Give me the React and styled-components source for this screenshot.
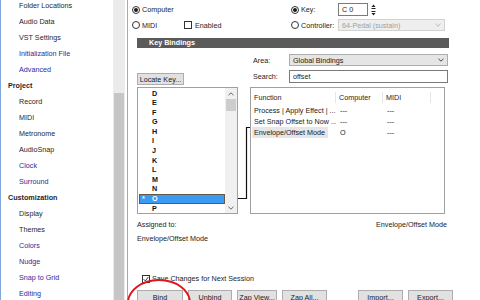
import React from 'react';
import styled, { createGlobalStyle } from 'styled-components';

const GlobalStyle = createGlobalStyle`
  html, body {
    margin: 0;
    padding: 0;
    background: #fff;
  }
  body {
    font-family: 'Liberation Sans', Arial, sans-serif;
    font-size: 7.2px;
    color: #1c1c1c;
  }
`;

const navItems = [
  { label: 'Folder Locations' },
  { label: 'Audio Data' },
  { label: 'VST Settings' },
  { label: 'Initialization File', blue: true },
  { label: 'Advanced', blue: true },
  { label: 'Project', head: true },
  { label: 'Record' },
  { label: 'MIDI' },
  { label: 'Metronome' },
  { label: 'AudioSnap' },
  { label: 'Clock', blue: true },
  { label: 'Surround', blue: true },
  { label: 'Customization', head: true },
  { label: 'Display' },
  { label: 'Themes' },
  { label: 'Colors', blue: true },
  { label: 'Nudge', blue: true },
  { label: 'Snap to Grid', blue: true },
  { label: 'Editing', blue: true },
];

const keys = ['D', 'E', 'F', 'G', 'H', 'I', 'J', 'K', 'L', 'M', 'N', 'O', 'P'];

const bindings = [
  { fn: 'Process | Apply Effect | ...', comp: '---', midi: '---' },
  { fn: 'Set Snap Offset to Now ...', comp: '---', midi: '---' },
  { fn: 'Envelope/Offset Mode', comp: 'O', midi: '---', current: true },
];

const Window = styled.div`
  position: relative;
  width: 480px;
  height: 300px;
  display: flex;
  overflow: hidden;
  border-left: 1px solid #7fa7d9;
  box-sizing: border-box;
`;

const Sidebar = styled.nav`
  width: 112px;
  flex: none;
  background: #fff;
  overflow: hidden;
`;

const NavList = styled.ul`
  list-style: none;
  margin: -2.5px 0 0;
  padding: 0;
`;

const NavItem = styled.li`
  height: 16px;
  line-height: 16px;
  white-space: nowrap;
  padding-left: ${p => (p.$head ? '7px' : '18px')};
  font-weight: ${p => (p.$head ? 700 : 400)};
  color: ${p => (p.$blue ? '#2b2ba0' : '#1f1f2c')};
`;

const SideScroll = styled.div`
  width: 12px;
  flex: none;
  display: flex;
  flex-direction: column;
  background: #ebebeb;
  padding: 0 1px;
  box-sizing: border-box;
`;

const SideThumb = styled.div`
  margin-top: 93px;
  flex: 1;
  background: #c6c6c6;
`;

const Panel = styled.main`
  flex: 1;
  margin-left: 2px;
  border-left: 1px solid #a9a9a9;
  padding: 3px 0 0 4px;
  display: flex;
  flex-direction: column;
  background: #fff;
`;

const TopRow = styled.div`
  display: flex;
  align-items: center;
  height: ${p => p.$h || 14}px;
  margin-top: ${p => p.$mt || 0}px;
`;

const Group = styled.div`
  display: flex;
  align-items: center;
  width: ${p => p.$w}px;
  flex: none;
  gap: 2px;
  white-space: nowrap;
`;

const Radio = styled.span`
  width: 8px;
  height: 8px;
  box-sizing: border-box;
  border: 1px solid #333;
  border-radius: 50%;
  display: inline-flex;
  align-items: center;
  justify-content: center;
  flex: none;
  background: #fff;
  &::after {
    content: '';
    width: 4px;
    height: 4px;
    border-radius: 50%;
    background: ${p => (p.$on ? '#1a1a1a' : 'transparent')};
  }
`;

const Check = styled.span`
  width: 8px;
  height: 8px;
  box-sizing: border-box;
  border: 1px solid #333;
  background: #fff;
  flex: none;
  display: inline-flex;
  align-items: center;
  justify-content: center;
`;

const CheckLabel = styled.span`
  margin-left: 1px;
`;

const TextBox = styled.div`
  width: ${p => p.$w}px;
  height: ${p => p.$h || 13}px;
  box-sizing: border-box;
  border: 1px solid #7a7a7a;
  background: #fff;
  display: flex;
  align-items: center;
  padding-left: 3px;
  white-space: nowrap;
`;

const Spinner = styled.svg`
  margin-left: 3px;
  flex: none;
`;

const Combo = styled.div`
  width: ${p => p.$w}px;
  height: ${p => p.$h || 12}px;
  box-sizing: border-box;
  border: 1px solid ${p => (p.$disabled ? '#d2d2d2' : '#adadad')};
  background: ${p => (p.$disabled ? '#eeeeee' : '#e5e5e5')};
  color: ${p => (p.$disabled ? '#a0a0a0' : '#1a1a1a')};
  display: flex;
  align-items: center;
  justify-content: space-between;
  padding: 0 3px;
  white-space: nowrap;
`;

const Chevron = ({ color }) => (
  <svg width="6" height="4" viewBox="0 0 6 4">
    <path d="M0.5 0.8 L3 3.2 L5.5 0.8" fill="none" stroke={color} strokeWidth="0.9" />
  </svg>
);

const SectionBar = styled.div`
  margin: 7px 0 0 5px;
  width: 312px;
  height: 10px;
  background: #5b5b5b;
  color: #fff;
  font-weight: 700;
  line-height: 10px;
  padding-left: 12px;
  box-sizing: border-box;
`;

const BindGrid = styled.div`
  margin: 6px 0 0 5px;
  display: grid;
  grid-template-columns: 101px 14px 197px;
  grid-template-rows: 31px 127px;
  row-gap: 2px;
`;

const LeftTop = styled.div`
  display: flex;
  align-items: flex-end;
`;

const Button = styled.button`
  font: inherit;
  color: #1a1a1a;
  width: ${p => p.$w || 46}px;
  height: ${p => p.$h || 14}px;
  padding: 0;
  border: 1px solid #adadad;
  background: #e1e1e1;
  box-sizing: border-box;
  text-align: center;
  flex: none;
`;

const FieldStack = styled.div`
  display: flex;
  flex-direction: column;
  gap: 4px;
`;

const FieldRow = styled.div`
  display: flex;
  align-items: center;
`;

const FieldLabel = styled.span`
  width: 36px;
  padding-left: 1px;
  flex: none;
`;

const KeyBox = styled.div`
  border: 1px solid #a0a0a0;
  display: flex;
  box-sizing: border-box;
  background: #fff;
`;

const KeyList = styled.ul`
  list-style: none;
  margin: 0;
  padding: 0.5px 0 0 1px;
  flex: 1;
`;

const KeyRow = styled.li`
  height: 9.6px;
  line-height: 9.6px;
  display: flex;
  font-weight: 700;
  color: ${p => (p.$sel ? '#fff' : '#111')};
  background: ${p => (p.$sel ? '#3b9af2' : 'transparent')};
  outline: ${p => (p.$sel ? '1px solid #6a5846' : 'none')};
  outline-offset: -1px;
`;

const Star = styled.span`
  width: 13px;
  padding-left: 3px;
  box-sizing: border-box;
`;

const ListScroll = styled.div`
  width: 12px;
  background: #f0f0f0;
  display: flex;
  flex-direction: column;
  align-items: center;
`;

const ScrollArrow = styled.div`
  height: 11px;
  display: flex;
  align-items: center;
  justify-content: center;
`;

const ListThumb = styled.div`
  width: 10px;
  height: 12px;
  background: #cdcdcd;
`;

const ScrollFill = styled.div`
  flex: 1;
`;

const Connector = styled.svg`
  width: 14px;
  height: 127px;
`;

const Table = styled.div`
  border: 1px solid #a0a0a0;
  box-sizing: border-box;
  margin-left: -2px;
  width: 195px;
  background: #fff;
  display: grid;
  grid-template-columns: 85px 47px 48px 1fr;
  grid-auto-rows: min-content;
  align-content: start;
  padding-top: 4px;
`;

const Th = styled.div`
  height: 11px;
  line-height: 11px;
  padding-left: 3px;
  border-right: ${p => (p.$last ? 'none' : '1px solid #e6e6e6')};
  margin-bottom: 2px;
`;

const Td = styled.div`
  height: 11px;
  line-height: 11px;
  padding-left: ${p => (p.$first ? '2px' : '4px')};
  white-space: nowrap;
  overflow: hidden;
  color: #1a1a1a;
  background: ${p => (p.$hl ? '#e6e6e6' : 'transparent')};
  margin-right: ${p => (p.$hl ? '8px' : '0')};
  margin-left: ${p => (p.$first ? '1px' : '0')};
`;

const InfoRow = styled.div`
  margin: ${p => p.$mt}px 0 0 5px;
  width: 310px;
  display: flex;
  justify-content: space-between;
  line-height: 10px;
  white-space: nowrap;
`;

const SaveRow = styled.div`
  margin: 30px 0 0 10px;
  display: flex;
  align-items: center;
  gap: 2px;
  height: 10px;
`;

const ButtonBar = styled.div`
  margin: 7px 0 0 5px;
  display: flex;
  gap: 5px;
`;

const Spacer = styled.div`
  width: 21px;
  flex: none;
`;

const Annotation = styled.svg`
  position: absolute;
  left: 120px;
  top: 272px;
  pointer-events: none;
`;

export default function App() {
  return (
    <>
      <GlobalStyle />
      <Window>
        <Sidebar>
          <NavList>
            {navItems.map(item => (
              <NavItem key={item.label} $head={item.head} $blue={item.blue}>
                {item.label}
              </NavItem>
            ))}
          </NavList>
        </Sidebar>
        <SideScroll>
          <SideThumb />
        </SideScroll>

        <Panel>
          <TopRow>
            <Group $w={159}>
              <Radio $on />
              <span>Computer</span>
            </Group>
            <Group $w={47}>
              <Radio $on />
              <span>Key:</span>
            </Group>
            <TextBox $w={30}>C 0</TextBox>
            <Spinner width="5" height="12" viewBox="0 0 5 12">
              <path d="M2.5 0.5 L4.5 3 L0.5 3 Z" fill="#222" />
              <rect x="0.5" y="4" width="4" height="1" fill="#222" />
              <rect x="0.5" y="7" width="4" height="1" fill="#222" />
              <path d="M0.5 9 L4.5 9 L2.5 11.5 Z" fill="#222" />
            </Spinner>
          </TopRow>
          <TopRow $mt={3} $h={13}>
            <Group $w={52}>
              <Radio />
              <span>MIDI</span>
            </Group>
            <Group $w={107}>
              <Check />
              <CheckLabel>Enabled</CheckLabel>
            </Group>
            <Group $w={47}>
              <Radio />
              <span>Controller:</span>
            </Group>
            <Combo $w={107} $disabled>
              <span>64-Pedal (sustain)</span>
              <Chevron color="#b4b4b4" />
            </Combo>
          </TopRow>

          <SectionBar>Key Bindings</SectionBar>

          <BindGrid>
            <LeftTop>
              <Button $w={47} $h={12}>Locate Key...</Button>
            </LeftTop>
            <div />
            <FieldStack>
              <FieldRow>
                <FieldLabel>Area:</FieldLabel>
                <Combo $w={159}>
                  <span>Global Bindings</span>
                  <Chevron color="#333" />
                </Combo>
              </FieldRow>
              <FieldRow>
                <FieldLabel>Search:</FieldLabel>
                <TextBox $w={159}>offset</TextBox>
              </FieldRow>
            </FieldStack>

            <KeyBox>
              <KeyList>
                {keys.map(k => (
                  <KeyRow key={k} $sel={k === 'O'}>
                    <Star>{k === 'O' ? '*' : ''}</Star>
                    <span>{k}</span>
                  </KeyRow>
                ))}
              </KeyList>
              <ListScroll>
                <ScrollArrow>
                  <svg width="6" height="4" viewBox="0 0 6 4">
                    <path d="M0.5 3.2 L3 0.8 L5.5 3.2" fill="none" stroke="#555" strokeWidth="0.9" />
                  </svg>
                </ScrollArrow>
                <ListThumb />
                <ScrollFill />
                <ScrollArrow>
                  <Chevron color="#555" />
                </ScrollArrow>
              </ListScroll>
            </KeyBox>
            <Connector viewBox="0 0 14 127">
              <path d="M0 111.5 H8.5 V40.5 H14" fill="none" stroke="#111" strokeWidth="1.2" />
            </Connector>
            <Table>
              <Th>Function</Th>
              <Th>Computer</Th>
              <Th>MIDI</Th>
              <Th $last />
              {bindings.map(b => (
                <React.Fragment key={b.fn}>
                  <Td $first $hl={b.current}>{b.fn}</Td>
                  <Td>{b.comp}</Td>
                  <Td>{b.midi}</Td>
                  <Td />
                </React.Fragment>
              ))}
            </Table>
          </BindGrid>

          <InfoRow $mt={6}>
            <span>Assigned to:</span>
            <span>Envelope/Offset Mode</span>
          </InfoRow>
          <InfoRow $mt={4}>
            <span>Envelope/Offset Mode</span>
          </InfoRow>

          <SaveRow>
            <Check>
              <svg width="6" height="6" viewBox="0 0 6 6">
                <path d="M0.6 3.2 L2.3 4.9 L5.4 0.9" fill="none" stroke="#222" strokeWidth="0.9" />
              </svg>
            </Check>
            <span>Save Changes for Next Session</span>
          </SaveRow>

          <ButtonBar>
            <Button>Bind</Button>
            <Button $w={44}>Unbind</Button>
            <Button $w={40}>Zap View...</Button>
            <Button $w={45}>Zap All...</Button>
            <Spacer />
            <Button $w={45}>Import...</Button>
            <Button $w={45}>Export...</Button>
          </ButtonBar>
        </Panel>

        <Annotation width="80" height="40" viewBox="0 0 80 40">
          <ellipse cx="38" cy="31" rx="31" ry="23" fill="none" stroke="#e3131b" strokeWidth="2" />
        </Annotation>
      </Window>
    </>
  );
}
